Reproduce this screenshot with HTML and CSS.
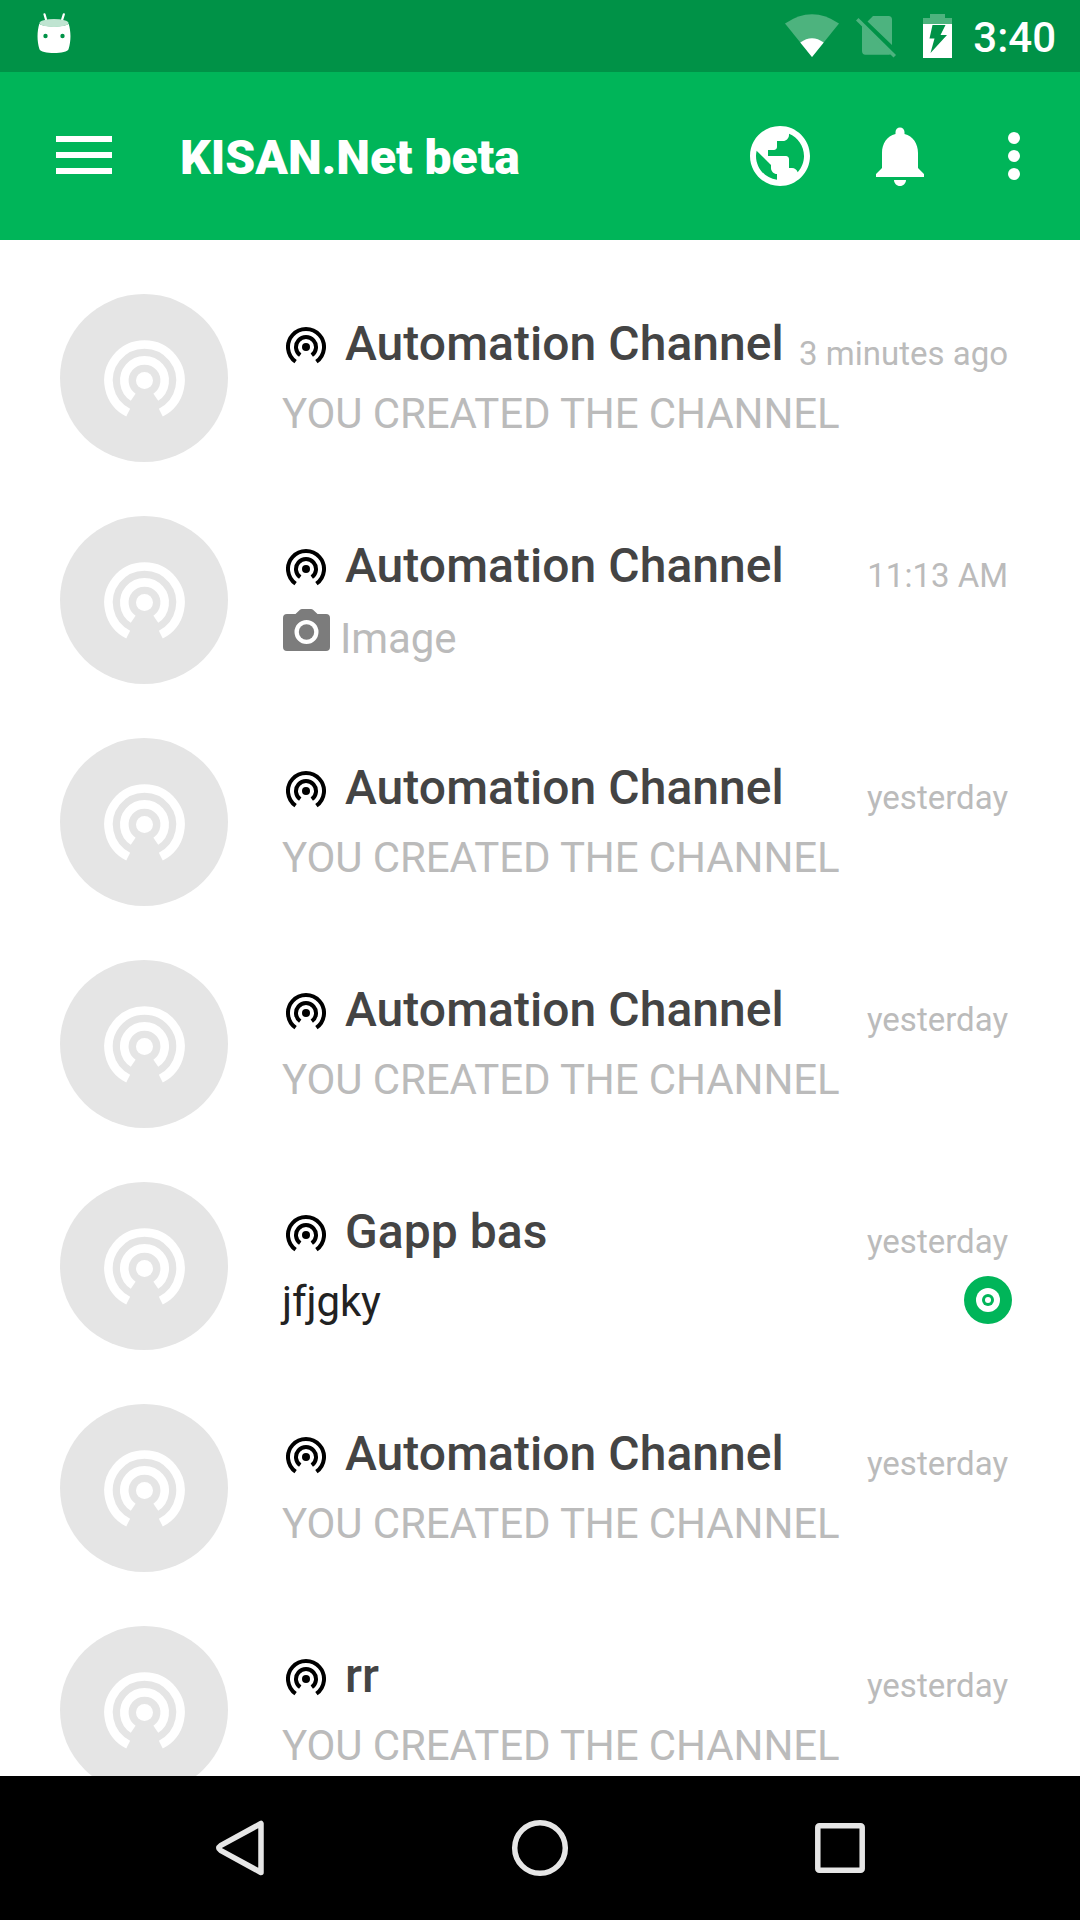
FILE: index.html
```html
<!DOCTYPE html>
<html lang="en">
<head>
<meta charset="utf-8">
<title>KISAN.Net beta</title>
<link rel="stylesheet" href="styles.css">
</head>
<body>
<svg class="defs" aria-hidden="true">
  <symbol id="channel" viewBox="0 0 97 97"><circle cx="48.500" cy="52.500" r="8.500"/><path class="wave" d="M32.200 84.600A36 36 0 1 1 64.800 84.600M37.200 69.300A20.200 20.200 0 1 1 59.800 69.300"/></symbol>
  <symbol id="channel-small" viewBox="0 0 40 40"><circle cx="20" cy="20" r="4"/><path class="ring" d="M9.600 34.700A18 18 0 1 1 30.400 34.700M14.200 28.200A10 10 0 1 1 25.800 28.200"/></symbol>
</svg>
<div class="screen">
  <header class="status">
    <svg class="debug" viewBox="0 0 34 40"><path class="antenna" d="M7.500 1.300l2 7M26.800 1.300l-2.200 7"/><path d="M2.400 10.500C0 18-.2 28 2.400 36c1.200 5.300 28 5.300 29.200 0 2.600-8 2.400-18 0-25.500-2 4-27 4-29.200 0z"/><ellipse class="dim" cx="17" cy="10" rx="14.500" ry="4"/><circle class="eye" cx="8.500" cy="23" r="2.200"/><circle class="eye" cx="25.500" cy="23" r="2.200"/></svg>
    <div class="indicators">
      <svg class="wifi" viewBox="0 0 54 44"><path class="dim" d="M0 9.600Q27-9 54 9.600L27 43z"/><path d="M15.300 28.600Q27 20 38.700 28.600L27 43z"/></svg>
      <svg class="sim dim" viewBox="0 0 40 42"><path d="M11.500 5.500L17 0h15.500q3.500 0 3.500 3.500V29zM6 9.500L35 38q-1 .7-2 .7H9.500Q6 38.700 6 35z"/><path d="M0 4.500l2.500-2.400L40 39l-2.500 2.500z"/></svg>
      <svg class="battery" viewBox="0 0 29 44"><path class="dim" d="M0 10V4h7V0h15v4h7v6z"/><path fill-rule="evenodd" d="M0 10h29v34H0zM9.500 11h13L17.500 21H24L7.500 39l4-14.500H6.500z"/></svg>
      <span class="clock">3:40</span>
    </div>
  </header>
  <nav class="appbar">
    <svg class="menu" viewBox="0 0 56 38"><path d="M0 0h56v6H0zM0 16h56v6H0zM0 32h56v6H0z"/></svg>
    <h1 class="title">KISAN.Net beta</h1>
    <svg class="action" viewBox="0 0 24 24"><path d="M12 2C6.480 2 2 6.480 2 12s4.480 10 10 10 10-4.480 10-10S17.520 2 12 2zm-1 17.930c-3.950-.49-7-3.850-7-7.930 0-.62.080-1.210.210-1.790L9 15v1c0 1.100.9 2 2 2v1.930zm6.900-2.540c-.26-.81-1-1.390-1.900-1.390h-1v-3c0-.55-.45-1-1-1H8v-2h2c.55 0 1-.45 1-1V7h2c1.100 0 2-.9 2-2v-.41c2.930 1.190 5 4.060 5 7.410 0 2.080-.8 3.970-2.100 5.390z"/></svg>
    <svg class="action" viewBox="0 0 24 24"><path d="M12 22c1.100 0 2-.9 2-2h-4c0 1.100.890 2 2 2zm6-6v-5c0-3.070-1.640-5.640-4.500-6.320V4c0-.83-.67-1.500-1.500-1.500s-1.500.67-1.500 1.500v.68C7.630 5.360 6 7.920 6 11v5l-2 2v1h16v-1l-2-2z"/></svg>
    <svg class="more" viewBox="0 0 12 48"><circle cx="6" cy="6" r="6"/><circle cx="6" cy="24" r="6"/><circle cx="6" cy="42" r="6"/></svg>
  </nav>
  <main class="list">
    <article class="row">
      <div class="avatar"><svg><use href="#channel"/></svg></div>
      <div class="body">
        <div class="top"><svg class="kind"><use href="#channel-small"/></svg><h2>Automation Channel</h2><time>3 minutes ago</time></div>
        <div class="sub"><p>YOU CREATED THE CHANNEL</p></div>
      </div>
    </article>
    <article class="row">
      <div class="avatar"><svg><use href="#channel"/></svg></div>
      <div class="body">
        <div class="top"><svg class="kind"><use href="#channel-small"/></svg><h2>Automation Channel</h2><time>11:13 AM</time></div>
        <div class="sub photo"><svg class="camera" viewBox="0 0 47 42"><path fill-rule="evenodd" d="M4 5h8.500L17 .8q.8-.8 2-.8h9q1.200 0 2 .8L34.500 5H43q4 0 4 4v29q0 4-4 4H4q-4 0-4-4V9q0-4 4-4zM23.500 11a12 12 0 1 0 0 24 12 12 0 1 0 0-24z"/><circle cx="23.500" cy="23" r="7.700"/></svg><p>Image</p></div>
      </div>
    </article>
    <article class="row">
      <div class="avatar"><svg><use href="#channel"/></svg></div>
      <div class="body">
        <div class="top"><svg class="kind"><use href="#channel-small"/></svg><h2>Automation Channel</h2><time>yesterday</time></div>
        <div class="sub"><p>YOU CREATED THE CHANNEL</p></div>
      </div>
    </article>
    <article class="row">
      <div class="avatar"><svg><use href="#channel"/></svg></div>
      <div class="body">
        <div class="top"><svg class="kind"><use href="#channel-small"/></svg><h2>Automation Channel</h2><time>yesterday</time></div>
        <div class="sub"><p>YOU CREATED THE CHANNEL</p></div>
      </div>
    </article>
    <article class="row">
      <div class="avatar"><svg><use href="#channel"/></svg></div>
      <div class="body">
        <div class="top"><svg class="kind"><use href="#channel-small"/></svg><h2>Gapp bas</h2><time>yesterday</time></div>
        <div class="sub unread"><p>jfjgky</p><svg class="badge" viewBox="0 0 48 48"><circle class="green" cx="24" cy="24" r="24"/><circle class="white" cx="24" cy="24" r="12"/><circle class="green" cx="24" cy="24" r="6"/><circle class="white" cx="24" cy="24" r="3"/></svg></div>
      </div>
    </article>
    <article class="row">
      <div class="avatar"><svg><use href="#channel"/></svg></div>
      <div class="body">
        <div class="top"><svg class="kind"><use href="#channel-small"/></svg><h2>Automation Channel</h2><time>yesterday</time></div>
        <div class="sub"><p>YOU CREATED THE CHANNEL</p></div>
      </div>
    </article>
    <article class="row">
      <div class="avatar"><svg><use href="#channel"/></svg></div>
      <div class="body">
        <div class="top"><svg class="kind"><use href="#channel-small"/></svg><h2>rr</h2><time>yesterday</time></div>
        <div class="sub"><p>YOU CREATED THE CHANNEL</p></div>
      </div>
    </article>
  </main>
  <footer class="navbar">
    <svg viewBox="0 0 60 60"><path d="M51 5.500v49L10.500 32.300q-3.500-2.300 0-4.600z"/></svg>
    <svg viewBox="0 0 60 60"><circle cx="30" cy="30" r="25.300"/></svg>
    <svg viewBox="0 0 60 60"><rect x="7.800" y="7.800" width="44.400" height="44.400" rx="1.500"/></svg>
  </footer>
</div>
</body>
</html>
```
FILE: styles.css
```css
* { box-sizing: border-box; margin: 0; padding: 0; }
body { width: 1080px; height: 1920px; overflow: hidden; background: #fff; font-family: Roboto, "Liberation Sans", sans-serif; }
svg { display: block; flex: none; }
.defs { display: none; }
.screen { display: flex; flex-direction: column; height: 1920px; }

.status { display: flex; justify-content: space-between; height: 72px; padding: 13px 24px 0 37px; background: #009247; fill: #fff; }
.debug { width: 34px; height: 40px; }
.antenna { fill: none; stroke: #fff; stroke-width: 2.2; stroke-linecap: round; }
.debug .dim { fill: #bfe4d1; opacity: 1; }
.eye { fill: #009247; }
.dim { opacity: .3; }
.indicators { display: flex; align-items: flex-start; }
.wifi { width: 54px; height: 44px; margin: 1px 17px 0 0; }
.sim { width: 40px; height: 42px; margin: 3px 27px 0 0; }
.battery { width: 29px; height: 44px; margin: 1px 21px 0 0; }
.clock { color: #fff; font-size: 42px; font-weight: 500; line-height: 50px; }

.appbar { display: flex; align-items: center; height: 168px; padding: 0 60px 0 56px; background: #00b559; fill: #fff; }
.menu { width: 56px; height: 38px; margin-bottom: 2px; }
.title { flex: 1; margin-left: 68px; padding-top: 3px; color: #fff; font-size: 48px; font-weight: 900; line-height: 56px; white-space: nowrap; }
.action { width: 72px; height: 72px; margin-right: 48px; }
.action + .more { margin-left: 24px; }
.more { width: 12px; height: 48px; }

.list { flex: 1; min-height: 0; overflow: hidden; padding-top: 27px; background: #fff; }
.row { display: flex; height: 222px; padding: 27px 72px 0 60px; }
.avatar { display: flex; justify-content: center; width: 168px; height: 168px; padding-top: 34px; border-radius: 50%; background: #e5e5e5; fill: #fff; }
.avatar svg { width: 97px; height: 97px; }
.wave { fill: none; stroke: #fff; stroke-width: 8.6; }
.body { flex: 1; padding: 21px 0 0 54px; }
.top { display: flex; align-items: flex-start; height: 71px; }
.kind { width: 40px; height: 40px; margin: 12px 0 0 4px; }
.ring { fill: none; stroke: #000; stroke-width: 4; }
.top h2 { margin-left: 19px; color: #444; font-size: 48px; font-weight: 500; letter-spacing: .05px; line-height: 58px; white-space: nowrap; }
.top time { margin: 11px 0 0 auto; color: #bbb; font-size: 33px; line-height: 56px; white-space: nowrap; }
.sub { display: flex; height: 56px; color: #bbb; font-size: 42px; letter-spacing: -.1px; line-height: 56px; white-space: nowrap; }
.camera { width: 47px; height: 42px; margin: 1px 10px 0 1px; fill: #7c7c7c; }
.photo p { padding-top: 3px; }
.unread { justify-content: space-between; color: #222; }
.badge { width: 48px; height: 48px; margin: 1.5px -4px 0 0; }
.green { fill: #00b559; }
.white { fill: #fff; }

.navbar { display: flex; justify-content: center; gap: 240px; height: 144px; padding-top: 42px; background: #000; fill: none; stroke: #e6e6e6; stroke-width: 5.500; stroke-linejoin: round; }
.navbar svg { width: 60px; height: 60px; }
```
